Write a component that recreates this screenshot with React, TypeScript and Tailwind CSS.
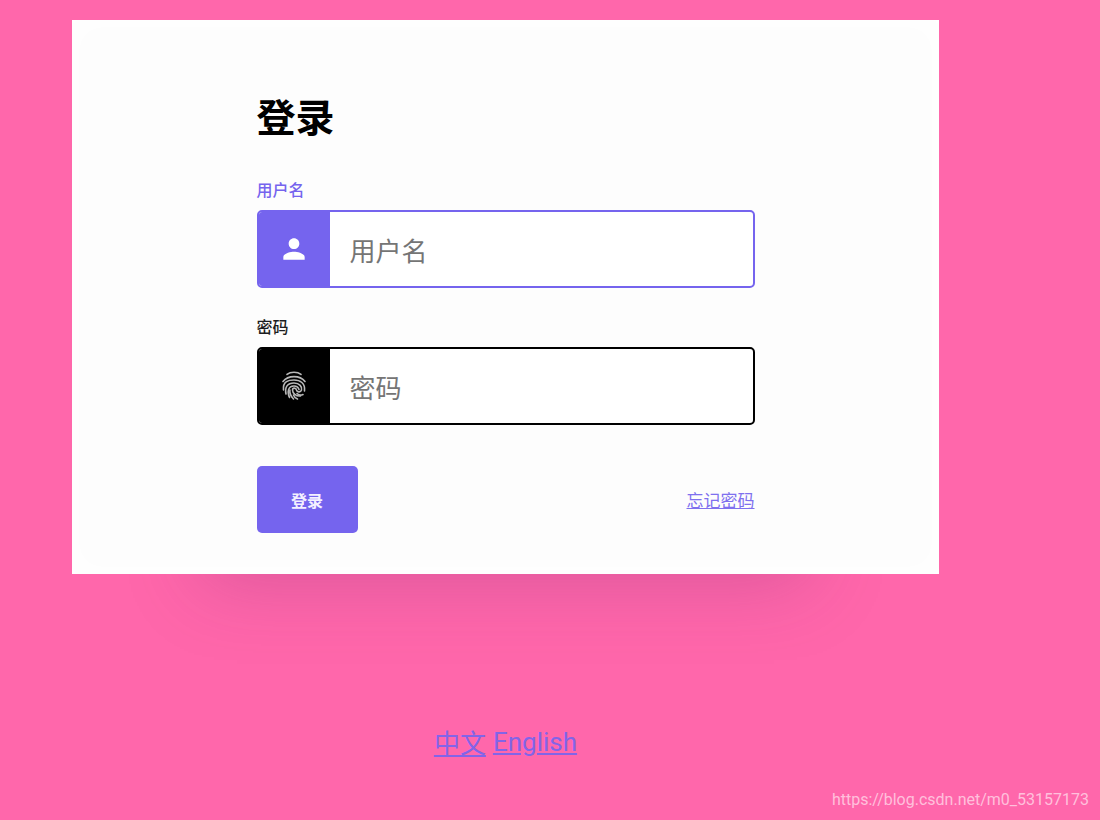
import { MdPerson } from "react-icons/md";

function FingerprintIcon() {
  return (
    <svg
      width="32"
      height="32"
      viewBox="0 0 32 32"
      fill="none"
      stroke="currentColor"
      strokeWidth="1.6"
      strokeLinecap="round"
      aria-hidden="true"
    >
      <path d="M9 4.4C12.500 1.600 19.500 1.600 23 4.400" />
      <path d="M5 11.500C10 5 22 5 27 11.500" />
      <path d="M5.500 20C4.500 11 11 10 16 10C22 10 27.500 13 26.500 21" />
      <path d="M8 24C6.500 17 9.500 13 16 13C21.500 13 24.500 17 23.500 20C22.500 23 19 22 18.500 20C18 17.500 14.500 17.500 14.500 20C14.500 23 18 26.500 22.500 26" />
      <path d="M11.500 27.500C9 22 10 16 16 16C19 16 20.500 18 21 19.500" />
      <path d="M15.500 29C12.500 26 11.500 23 11.900 20" />
      <path d="M19.500 29C17.500 28.200 16 26.500 15.500 25" />
      <path d="M25 24.500C23 25.500 20.500 25 19 23.500" />
    </svg>
  );
}

export default function App() {
  return (
    <div className="flex min-h-screen flex-col bg-[#ff67ab] pt-5 font-['Noto_Sans_CJK_SC',sans-serif]">
      <main className="mr-[161px] ml-[72px] flex flex-col">
        <section className="bg-[#fdfdfd] px-8 pt-[69px] pb-[41px] shadow-[0_140px_70px_-130px_rgba(120,40,110,0.25),inset_0_0_32px_#ffffff]">
          <form
            className="mx-auto flex max-w-[498px] flex-col"
            onSubmit={(e) => e.preventDefault()}
          >
            <h1 className="text-[39px] leading-[52px] font-bold text-black">登录</h1>

            <label
              htmlFor="username"
              className="mt-[38px] text-base leading-5 font-medium text-[#7564ee]"
            >
              用户名
            </label>
            <div className="mt-[11px] flex h-[78px] overflow-hidden rounded-[5px] border-2 border-[#7564ee] bg-white">
              <span className="flex w-[71px] shrink-0 items-center justify-center bg-[#7564ee] text-white">
                <MdPerson size={32} />
              </span>
              <input
                id="username"
                type="text"
                placeholder="用户名"
                className="min-w-0 flex-1 px-5 text-[26px] text-black outline-none placeholder:text-[#757575]"
              />
            </div>

            <label
              htmlFor="password"
              className="mt-7 text-base leading-5 font-medium text-[#1c1d21]"
            >
              密码
            </label>
            <div className="mt-[11px] flex h-[78px] overflow-hidden rounded-[5px] border-2 border-black bg-white">
              <span className="flex w-[71px] shrink-0 items-center justify-center bg-black text-[#b8b8b8]">
                <FingerprintIcon />
              </span>
              <input
                id="password"
                type="password"
                placeholder="密码"
                className="min-w-0 flex-1 px-5 text-[26px] text-black outline-none placeholder:text-[#757575]"
              />
            </div>

            <div className="mt-[41px] flex items-center justify-between">
              <button
                type="submit"
                className="h-[67px] w-[101px] rounded-[5px] bg-[#7564ee] text-base font-bold text-[#f4f1ff]"
              >
                登录
              </button>
              <a href="#forgot" className="text-[17px] leading-5 text-[#7f70ef] underline">
                忘记密码
              </a>
            </div>
          </form>
        </section>

        <nav className="mt-[150px] flex justify-center gap-[7px] text-[26px] leading-9 text-[#8264e8]">
          <a href="#zh" className="underline">
            中文
          </a>
          <a href="#en" className="font-['Roboto',sans-serif] underline">
            English
          </a>
        </nav>
      </main>

      <footer className="mt-auto pr-[11px] pb-[10px] text-right font-['Roboto',sans-serif] text-base leading-5 text-[#ffc0dc]">
        https://blog.csdn.net/m0_53157173
      </footer>
    </div>
  );
}
